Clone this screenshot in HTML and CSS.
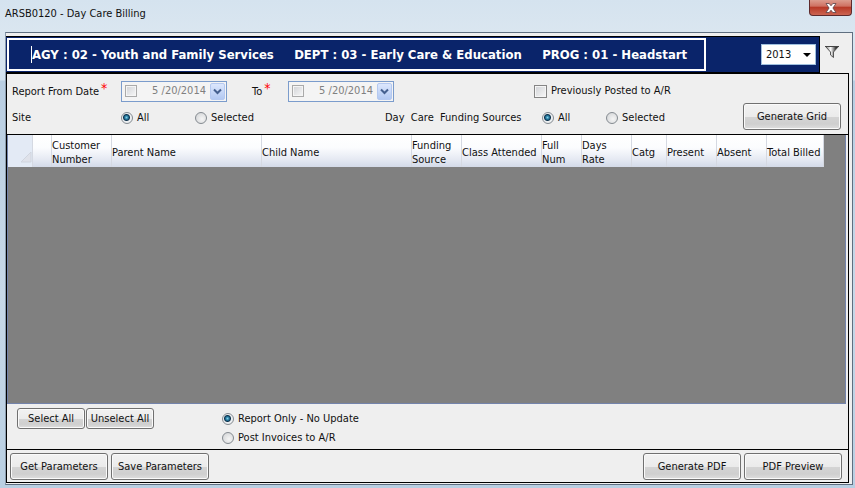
FILE: index.html
```html
<!DOCTYPE html>
<html lang="en">
<head>
<meta charset="utf-8">
<title>ARSB0120 - Day Care Billing</title>
<link rel="stylesheet" href="styles.css">
</head>
<body>
<div class="window">
  <header class="titlebar">
    <h1 class="title">ARSB0120 - Day Care Billing</h1>
    <button class="close" type="button" aria-label="Close">
      <svg width="12" height="10" viewBox="0 0 12 10"><path d="M1 .5h3.2L6 2.8 7.800 .5H11L7.900 5 11 9.500H7.800L6 7.200 4.200 9.500H1L4.100 5z" fill="#fff" stroke="#5b4248" stroke-width=".8"/></svg>
    </button>
  </header>
  <main class="client">
    <div class="top">
      <div class="banner">
        <div class="hierarchy"><input class="hierarchy-text" type="text" readonly aria-label="Hierarchy" value="AGY : 02 - Youth and Family Services &nbsp; &nbsp; DEPT : 03 - Early Care &amp; Education &nbsp; &nbsp; PROG : 01 - Headstart"></div>
        <div class="year-wrap">
          <select class="year" aria-label="Year"><option>2013</option></select>
          <svg class="year-arrow" width="8" height="4" viewBox="0 0 8 4"><path d="M0 0h8L4 4z" fill="#000"/></svg>
        </div>
      </div>
      <button class="filter" type="button" aria-label="Filter">
        <svg width="16" height="14" viewBox="0 0 16 14">
          <defs><linearGradient id="metal"><stop offset="0" stop-color="#777"/><stop offset=".4" stop-color="#fff"/><stop offset=".8" stop-color="#333"/></linearGradient></defs>
          <path d="M1.500 1.500h13L9.500 7v5.500L6.500 10V7z" fill="url(#metal)" stroke="#555"/>
          <path d="M1 1.500h14" stroke="#444"/>
        </svg>
      </button>
    </div>

    <form class="panel">
      <section class="filters">
        <div class="filter-lines">
          <div class="line">
            <label class="caption" for="from">Report From Date<span class="req">*</span></label>
            <div class="date">
              <input class="check small" type="checkbox" aria-label="Use from date">
              <input class="date-text" id="from" type="text" value="5 /20/2014">
              <button class="drop" type="button" aria-label="Open from calendar"><svg width="9" height="7" viewBox="0 0 9 7"><path d="M1 1.500l3.500 3.500L8 1.500" fill="none" stroke="#45608f" stroke-width="2"/></svg></button>
            </div>
            <label class="to" for="to">To<span class="req">*</span></label>
            <div class="date">
              <input class="check small" type="checkbox" aria-label="Use to date">
              <input class="date-text" id="to" type="text" value="5 /20/2014">
              <button class="drop" type="button" aria-label="Open to calendar"><svg width="9" height="7" viewBox="0 0 9 7"><path d="M1 1.500l3.500 3.500L8 1.500" fill="none" stroke="#45608f" stroke-width="2"/></svg></button>
            </div>
            <label class="choice posted"><input class="check" type="checkbox">Previously Posted to A/R</label>
          </div>
          <div class="line">
            <span class="caption">Site</span>
            <label class="choice site-all"><input class="radio" type="radio" name="site" checked>All</label>
            <label class="choice site-selected"><input class="radio" type="radio" name="site">Selected</label>
            <span class="funding">Day&nbsp; Care&nbsp; Funding Sources</span>
            <label class="choice funding-all"><input class="radio" type="radio" name="funding" checked>All</label>
            <label class="choice"><input class="radio" type="radio" name="funding">Selected</label>
          </div>
        </div>
        <button class="btn large" type="button">Generate Grid</button>
      </section>

      <div class="gridview">
        <table class="grid">
          <colgroup><col class="w25"><col class="w20"><col class="w60"><col class="w150"><col class="w150"><col class="w50"><col class="w80"><col class="w40"><col class="w50"><col class="w35"><col class="w50"><col class="w50"><col class="w56"></colgroup>
          <thead>
            <tr>
              <th class="corner"><svg width="12" height="12" viewBox="0 0 12 12"><path d="M11 1v10H1z" fill="#dfe2ea" stroke="#d0d5df"/></svg></th>
              <th></th>
              <th>Customer<br>Number</th>
              <th>Parent Name</th>
              <th>Child Name</th>
              <th>Funding<br>Source</th>
              <th>Class Attended</th>
              <th>Full<br>Num</th>
              <th>Days<br>Rate</th>
              <th>Catg</th>
              <th>Present</th>
              <th>Absent</th>
              <th>Total Billed</th>
            </tr>
          </thead>
        </table>
      </div>

      <section class="options">
        <div class="pair">
          <button class="btn compact" type="button">Select All</button>
          <button class="btn compact" type="button">Unselect All</button>
        </div>
        <div class="modes">
          <label class="choice"><input class="radio" type="radio" name="mode" checked>Report Only - No Update</label>
          <label class="choice"><input class="radio" type="radio" name="mode">Post Invoices to A/R</label>
        </div>
      </section>

      <footer class="actions">
        <button class="btn large" type="button">Get Parameters</button>
        <button class="btn large" type="button">Save Parameters</button>
        <button class="btn large push" type="button">Generate PDF</button>
        <button class="btn large" type="button">PDF Preview</button>
      </footer>
    </form>
  </main>
</div>
</body>
</html>
```
FILE: styles.css
```css
* { box-sizing: border-box; }

body {
  margin: 0;
  font: 11px/14px "DejaVu Sans Condensed", "Noto Sans", sans-serif;
  color: #111;
}

input, button, select { font: inherit; color: inherit; margin: 0; }
label, span { white-space: nowrap; }

.window {
  min-height: 100vh;
  display: flex;
  flex-direction: column;
  padding: 0 2px 3px 5px;
  background: linear-gradient(#d5e3ef, #dae6f0 32px, #d3e2ef 80px, #b9cee2 81px, #c7d8e8 60%, #b9cfe2);
}

.titlebar { display: flex; justify-content: space-between; height: 32px; }
.title { margin: 7px 0 0; font: inherit; }

.close {
  width: 43px;
  height: 16px;
  display: flex;
  align-items: center;
  justify-content: center;
  padding: 0;
  margin-right: 1px;
  border: 1px solid #5e2a2c;
  border-top: 0;
  border-radius: 0 0 4px 4px;
  background: linear-gradient(#dc9c8e, #cf7263 40%, #b83a28 50%, #cc6552);
}

.client {
  flex: 1;
  display: flex;
  flex-direction: column;
  padding: 3px 3px 1px 0;
  border: 1px solid #5f6f80;
  border-left-color: #8b9cad;
  background: #efefef;
}

.top { display: flex; height: 37px; }

.banner {
  flex: 1;
  display: flex;
  align-items: center;
  justify-content: space-between;
  padding-right: 3px;
  border: solid #000;
  border-width: 1px 1px 1px 0;
  background: #0a246a;
}

.hierarchy {
  flex: 0 1 699px;
  height: 33px;
  display: flex;
  align-items: center;
  padding-left: 22px;
  margin-left: 1px;
  border: 2px solid #fff;
}

.hierarchy-text {
  flex: 1;
  min-width: 0;
  height: 17px;
  padding: 0;
  border: 0;
  border-left: 1px solid #fff;
  outline: 0;
  background: none;
  color: #fff;
  font: bold 13px/17px "DejaVu Sans Condensed", "Noto Sans", sans-serif;
}

.year-wrap { position: relative; width: 55px; height: 21px; }
.year {
  appearance: none;
  width: 100%;
  height: 100%;
  padding: 0 4px;
  border: 1px solid #9fc0df;
  border-radius: 0;
  background: #fff;
}
.year-arrow { position: absolute; right: 5px; top: 9px; pointer-events: none; }

.filter {
  width: 29px;
  height: 31px;
  padding: 0 5px 0 0;
  border: 0;
  background: none;
  display: flex;
  align-items: center;
  justify-content: center;
}

.panel {
  flex: 1;
  display: flex;
  flex-direction: column;
  border: 1px solid #000;
}

.filters {
  display: flex;
  justify-content: space-between;
  align-items: flex-end;
  padding: 7px 7px 4px 5px;
  height: 61px;
  border-bottom: 1px solid #000;
}
.filter-lines { display: flex; flex-direction: column; gap: 5px; height: 50px; }
.line { display: flex; align-items: center; height: 22px; }
.caption { width: 109px; }
.req { color: #f00; font-size: 14px; line-height: 10px; padding-left: 2px; vertical-align: 2px; }

.date {
  display: flex;
  align-items: center;
  width: 106px;
  height: 21px;
  padding: 1px 1px 1px 3px;
  border: 1px solid #7b9ccc;
  background: #f4f4f4;
}
.date-text {
  flex: 1;
  min-width: 0;
  padding: 0 4px 0 0;
  border: 0;
  background: none;
  color: #808080;
  text-align: right;
}
.drop {
  width: 15px;
  height: 17px;
  padding: 0;
  border: 1px solid #b5c9f0;
  border-radius: 2px;
  background: linear-gradient(#dce7fd, #b3c9f2);
  display: flex;
  align-items: center;
  justify-content: center;
}
.to { width: 61px; padding-left: 25px; }

.choice { display: flex; align-items: center; gap: 4px; }
.posted { margin-left: 140px; }
.site-all { width: 74px; }
.site-selected { width: 190px; }
.funding { width: 157px; }
.funding-all { width: 64px; }

.check {
  appearance: none;
  flex: none;
  width: 13px;
  height: 13px;
  border: 1px solid #858585;
  background: linear-gradient(135deg, #d0d2d6, #f8f8f8);
  box-shadow: inset 0 0 0 1px #f5f5f5;
}
.check.small { width: 12px; height: 12px; border-color: #aaa; }

.radio {
  appearance: none;
  flex: none;
  width: 12px;
  height: 12px;
  border: 1px solid #858b91;
  border-radius: 50%;
  background: radial-gradient(circle at 60% 60%, #f5f5f5, #cfd1d3);
}
.radio:checked {
  background: radial-gradient(circle at 45% 45%, #7fd0e8 0, #1d6c92 2px, #10334d 3px, #eceff1 4px);
}

.btn {
  padding: 0;
  border: 1px solid #707070;
  border-radius: 3px;
  box-shadow: inset 0 0 0 1px #fafafa;
  background: linear-gradient(#f2f2f2, #ebebeb 50%, #d4d4d4 52%, #cfcfcf 80%, #dedede);
}
.large { width: 98px; height: 27px; }
.compact { width: 68px; height: 21px; }

.gridview {
  flex: 1;
  margin-right: 2px;
  border: solid #7383ab;
  border-width: 0 1px 1px;
  background: #808080;
}
.grid { table-layout: fixed; width: 816px; border-collapse: separate; border-spacing: 0; }
.grid th {
  height: 32px;
  padding: 3px 0 0;
  border-right: 1px solid #d5d9e2;
  background: linear-gradient(#fff, #fbfcfe 40%, #e6eaf3 75%, #d3dae8);
  font-weight: normal;
  text-align: left;
  white-space: nowrap;
}
.grid .corner { background: #e3eaf5; text-align: right; vertical-align: bottom; }
.w20 { width: 19px; }
.w25 { width: 25px; }
.w35 { width: 35px; }
.w40 { width: 40px; }
.w50 { width: 50px; }
.w56 { width: 57px; }
.w60 { width: 60px; }
.w80 { width: 80px; }
.w150 { width: 150px; }

.options { display: flex; gap: 68px; height: 46px; padding: 4px 10px; border-bottom: 1px solid #000; }
.pair { display: flex; gap: 1px; }
.modes { display: flex; flex-direction: column; gap: 5px; padding-top: 4px; }

.actions { display: flex; gap: 3px; height: 32px; padding: 3px 6px 2px 3px; }
.push { margin-left: auto; }
```
